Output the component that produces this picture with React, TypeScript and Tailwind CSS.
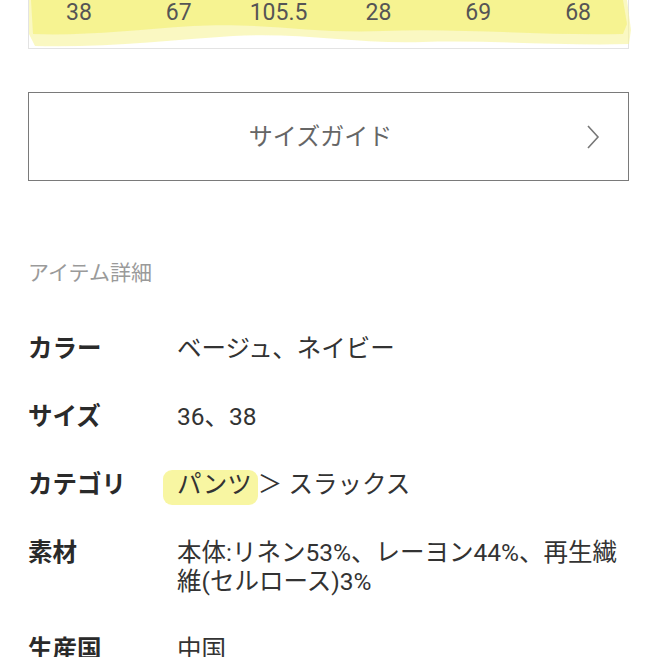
import React from 'react';

const FONT = { fontFamily: 'Roboto, "Noto Sans CJK JP", sans-serif' };

const SIZES = ['38', '67', '105.5', '28', '69', '68'];

const DETAILS: { label: string; value: React.ReactNode }[] = [
  { label: 'カラー', value: 'ベージュ、ネイビー' },
  { label: 'サイズ', value: '36、38' },
  {
    label: 'カテゴリ',
    value: (
      <span>
        <span className="relative">
          <span
            className="absolute -left-[14px] -right-[6px] top-[0px] -bottom-[6px] rounded-[9px] bg-[#f4f170] opacity-65"
            aria-hidden
          />
          <span className="relative">パンツ</span>
        </span>
        <span> ＞ スラックス</span>
      </span>
    ),
  },
  { label: '素材', value: '本体:リネン53%、レーヨン44%、再生繊維(セルロース)3%' },
  { label: '生産国', value: '中国' },
];

export default function App() {
  return (
    <div className="w-[657px] h-[657px] overflow-hidden bg-white px-[28px]" style={FONT}>
      {/* size table, last row */}
      <div className="relative border-x border-b border-[#e3e3e3] h-[49px]">
        <svg
          className="absolute top-0 -left-[6px] w-[612px] h-[50px] pointer-events-none"
          viewBox="0 0 612 50"
          aria-hidden
        >
          <path
            d="M6 0 L604 0 L608 30 L606 44 C540 46 470 40 400 42 C330 44 280 32 210 36 C150 40 80 48 12 46 L6 34 Z"
            fill="#f6f39a"
            opacity="0.6"
          />
          <path
            d="M8 0 L600 0 L604 24 L600 34 C520 36 440 28 360 31 C290 34 240 22 170 26 C110 30 60 36 10 34 Z"
            fill="#f2ee6a"
            opacity="0.55"
          />
        </svg>
        <div className="relative grid grid-cols-6 text-[23px] leading-[26px] text-[#555]">
          {SIZES.map((s, i) => (
            <div key={i} className="text-center">
              {s}
            </div>
          ))}
        </div>
      </div>

      {/* size guide button */}
      <div className="mt-[43px] h-[89px] border border-[#7a7a7a] flex items-center justify-center relative pr-[16px]">
        <span className="text-[24px] text-[#666]">サイズガイド</span>
        <svg
          className="absolute right-[28px] top-1/2 -translate-y-1/2 w-[14px] h-[24px]"
          viewBox="0 0 14 24"
          fill="none"
          stroke="#777"
          strokeWidth="1.6"
          aria-hidden
        >
          <polyline points="2,1 12,12 2,23" />
        </svg>
      </div>

      {/* item details */}
      <div className="mt-[77px] text-[21px] leading-[30px] text-[#9a9a9a]">アイテム詳細</div>

      <div className="mt-[46px] flex flex-col gap-[39px]">
        {DETAILS.map((d) => (
          <div key={d.label} className="flex text-[24.5px] leading-[29px]">
            <div className="w-[149px] shrink-0 font-bold text-[#2a2a2a]">{d.label}</div>
            <div className="flex-1 text-[#333] pr-[4px]">{d.value}</div>
          </div>
        ))}
      </div>
    </div>
  );
}
